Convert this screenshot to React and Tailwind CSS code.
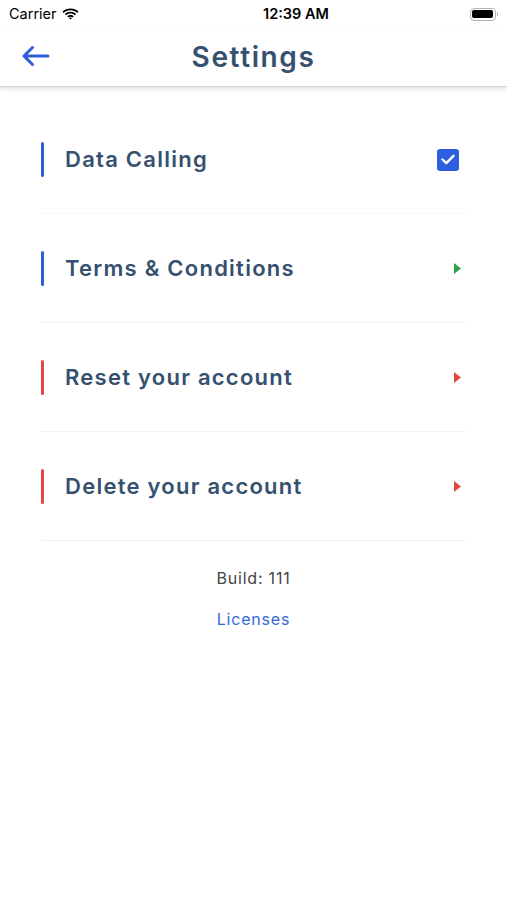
import React from "react";

function Row({ label, bar, right, first }) {
  return (
    <div className={`flex h-[109px] items-center border-b pr-[6px] ${first ? "border-[#f7f7f8]" : "border-[#f2f2f4]"}`}>
      <div className={`h-[35px] w-[3px] rounded-full ${bar}`} />
      <div className="ml-[21px] flex-1 font-['Inter',sans-serif] text-[22px] font-semibold tracking-[1.25px] text-[#36506f]">{label}</div>
      {right}
    </div>
  );
}

function Tri({ color }) {
  return (
    <svg width="7" height="11" viewBox="0 0 7 11" className="mr-[-1px]">
      <polygon points="0,0 7,5.5 0,11" fill={color} />
    </svg>
  );
}

export default function App() {
  return (
    <div className="h-[900px] w-[507px] bg-white font-['Inter',sans-serif]">
      {/* Status bar */}
      <div className="flex h-[28px] items-center justify-between px-[9px] text-[14.5px] text-black">
        <div className="flex items-center gap-[5px]">
          <span>Carrier</span>
          <svg width="17" height="12" viewBox="0 0 17 12">
            <path d="M8.5 2.2c2.6 0 5 1 6.8 2.7l1.2-1.3C14.4 1.6 11.6.4 8.5.4S2.6 1.6.5 3.6l1.2 1.3C3.5 3.2 5.9 2.2 8.5 2.2z" fill="#000" />
            <path d="M8.5 5.5c1.7 0 3.2.6 4.4 1.7l1.2-1.3C12.6 4.5 10.6 3.700 8.5 3.7S4.4 4.5 2.9 5.9l1.2 1.3C5.3 6.1 6.8 5.5 8.5 5.5z" fill="#000" />
            <path d="M8.5 8.8c.8 0 1.5.3 2 .8l1.2-1.3c-.8-.8-2-1.3-3.2-1.3s-2.4.5-3.2 1.3l1.2 1.3c.5-.5 1.2-.8 2-.8z" fill="#000" />
            <path d="M8.5 11.6l1.5-1.6c-.4-.4-.9-.6-1.5-.6s-1.1.2-1.5.6z" fill="#000" />
          </svg>
        </div>
        <div className="ml-[44px] font-semibold">12:39 AM</div>
        <div className="flex items-center">
          <div className="flex h-[13px] w-[26px] items-center rounded-[4px] border border-[#b5b5b5] p-[1.5px]">
            <div className="h-full w-full rounded-[2px] bg-black" />
          </div>
          <div className="ml-[1px] h-[4px] w-[1.5px] rounded-r bg-[#b5b5b5]" />
        </div>
      </div>
      {/* Nav bar */}
      <div className="relative flex h-[59px] items-center justify-center border-b border-[#d4d4d4] shadow-[0_2px_4px_rgba(0,0,0,0.12)]">
        <svg className="absolute left-[21px] top-[17px]" width="29" height="22" viewBox="0 0 29 22">
          <path d="M27 11H3M11.5 2.5L3 11l8.5 8.5" stroke="#2f5fd8" strokeWidth="3" fill="none" strokeLinecap="round" strokeLinejoin="round" />
        </svg>
        <div className="text-[28px] font-semibold tracking-[1.6px] text-[#36506f]">Settings</div>
      </div>
      {/* List */}
      <div className="mx-[41px] mt-[18px]">
        <Row
          first
          label="Data Calling"
          bar="bg-[#2f5de0]"
          right={
            <div className="mr-[1px] mt-[1px] flex h-[22px] w-[22px] items-center justify-center rounded-[3px] bg-[#2f5de0]">
              <svg width="14" height="11" viewBox="0 0 14 11">
                <path d="M1.5 5.5l3.8 3.6L12.5 1.8" stroke="#fff" strokeWidth="2.4" fill="none" strokeLinecap="round" strokeLinejoin="round" />
              </svg>
            </div>
          }
        />
        <Row label="Terms & Conditions" bar="bg-[#2f5de0]" right={<Tri color="#2ea24c" />} />
        <Row label="Reset your account" bar="bg-[#e5473c]" right={<Tri color="#e5473c" />} />
        <Row label="Delete your account" bar="bg-[#e5473c]" right={<Tri color="#e5473c" />} />
      </div>
      <div className="mt-[25px] flex flex-col items-center">
        <div className="text-[16px] tracking-[0.8px] text-[#444]">Build: 111</div>
        <div className="mt-[17px] text-[16px] tracking-[0.8px] text-[#3566dc]">Licenses</div>
      </div>
    </div>
  );
}
